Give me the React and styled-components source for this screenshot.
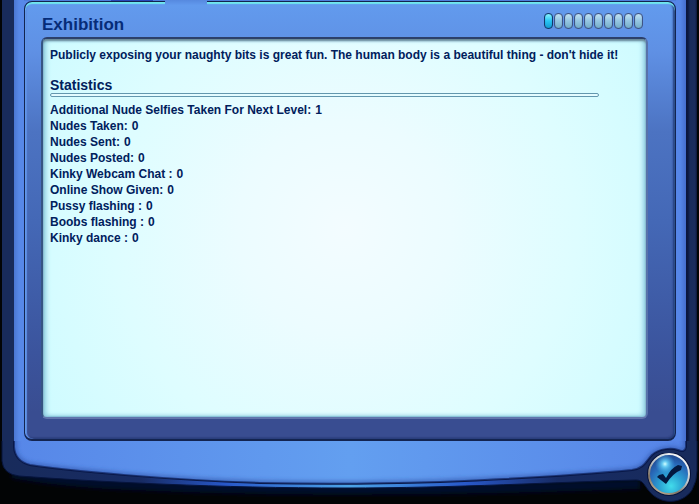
import React from "react";
import styled, { createGlobalStyle } from "styled-components";

const GlobalStyle = createGlobalStyle`
  * { box-sizing: border-box; }
  body {
    margin: 0;
    background: #020405;
    color: #00205c;
    font-family: "Liberation Sans", Arial, Helvetica, sans-serif;
    font-weight: bold;
  }
`;

const Window = styled.main`
  display: flex;
  flex-direction: column;
  min-height: 100vh;
`;

const Casing = styled.div`
  flex: 1;
  display: flex;
  flex-direction: column;
  margin: 0 2px;
  padding: 0 11px 0 12px;
  background: linear-gradient(to right, #182b5b 12px, #0a143c 13px, #0a143c calc(100% - 11px), #0c173f calc(100% - 9px), #182b5b calc(100% - 7px), #1a2c5e calc(100% - 2px), #0b1538 100%);
`;

const Shell = styled.div`
  flex: 1;
  display: flex;
  flex-direction: column;
  padding: 0 10px;
  background: linear-gradient(to right, #4a76d2, #5788e8 5px, #5580e2 50%, #5686e8 calc(100% - 6px), #456dcc);
`;

const TabStrip = styled.div`
  display: flex;
  height: 1px;
  padding-left: 87px;
  gap: 12px;
  background: #4d7edb;
`;

const TabEdge = styled.div`
  position: relative;
  z-index: 1;
  width: 42px;
  height: ${(p) => (p.$open ? "5px" : "1px")};
  background: ${(p) => (p.$open ? "linear-gradient(#5689df, #6199ed)" : "#2848b8")};
`;

const Panel = styled.section`
  flex: 1;
  display: flex;
  flex-direction: column;
  padding: 10px 27px 20px 16px;
  border: solid #132451;
  border-width: 1px 1px 2px;
  border-radius: 8px;
  background: linear-gradient(#629bee, #5f90e4 50px, #4c73c2 130px, #4468b6 220px, #3b549d 350px, #394d91 410px);
  box-shadow: inset 0 2px 1px #6fe6ee, inset 2px 0 1px #608fe7, inset -2px 0 2px #243e7d, inset 0 -1px 2px #202e63;
`;

const PanelHeader = styled.header`
  display: flex;
  align-items: flex-start;
  justify-content: space-between;
  height: 25px;
`;

const Title = styled.h1`
  margin: 3px 0 0 1px;
  font-size: 17px;
  line-height: 20px;
  color: #062c78;
`;

const Level = styled.div`
  display: flex;
  gap: 1px;
  margin-top: 1px;
  margin-right: 5px;
`;

const Pip = styled.span`
  width: 9px;
  height: 16px;
  border: 1px solid;
  border-radius: 4px;
  background: ${(p) => (p.$filled ? "linear-gradient(#8cf5ff, #28c5f4 50%, #159dd2)" : "linear-gradient(#c4e3f3, #98c8e4 45%, #74aec8)")};
  border-color: ${(p) => (p.$filled ? "#123a6c" : "#3f5486")};
  box-shadow: inset 0 0 1px ${(p) => (p.$filled ? "#1b6ea3" : "#4d6c9c")};
`;

const Screen = styled.div`
  flex: 1;
  padding: 8px 8px 8px 7px;
  border: 2px solid #365483;
  border-top-color: #2c406a;
  border-right-color: #5872aa;
  border-bottom-color: #6175ad;
  border-radius: 6px;
  background: radial-gradient(circle at 50% 50%, #f3fcff 0%, #ecfcff 30%, #defdff 65%, #cefbff 100%);
  box-shadow: inset 0 2px 2px #688797, inset 3px 0 5px #8dcbe0, inset -3px 0 5px #8fcbe4, inset 0 -1px 1px #7db2c3;
`;

const Description = styled.p`
  margin: 0;
  font-size: 12px;
  line-height: 16px;
`;

const SectionTitle = styled.h2`
  margin: 14px 0 0;
  font-size: 14px;
  line-height: 16px;
`;

const Divider = styled.div`
  height: 4px;
  margin-right: 39px;
  border: 1px solid #6397ae;
  border-radius: 2px;
  background: #e4fcff;
`;

const Stats = styled.dl`
  margin: 5px 0 0;
  font-size: 12px;
  line-height: 16px;
`;

const Stat = styled.div`
  display: flex;
  gap: 4px;
`;

const StatValue = styled.dd`
  margin: 0;
`;

const Footer = styled.footer`
  display: grid;
  grid-template-columns: minmax(0, 1fr);
  height: 63px;
  > * { grid-area: 1 / 1; }
`;

const FrameEdge = styled.svg`
  display: block;
  width: 100%;
  height: 63px;
`;

const AcceptButton = styled.button`
  justify-self: end;
  width: 44px;
  height: 44px;
  margin: 12px 8px 0 0;
  padding: 0;
  border: 0;
  border-radius: 50%;
  background: none;
  cursor: pointer;
  svg { display: block; width: 100%; height: 100%; }
`;

const stats = [
  ["Additional Nude Selfies Taken For Next Level:", 1],
  ["Nudes Taken:", 0],
  ["Nudes Sent:", 0],
  ["Nudes Posted:", 0],
  ["Kinky Webcam Chat :", 0],
  ["Online Show Given:", 0],
  ["Pussy flashing :", 0],
  ["Boobs flashing :", 0],
  ["Kinky dance :", 0],
];

function CurvedEdge() {
  const inner =
    "M14 -12V6Q15 20 30 24C70 30 170 39 260 42Q345 44 440 41C510 38 580 34 632 29C645 27 646 20 652 14C660 7 672 7 678 9Q685 12 686 6V-12Z";
  return (
    <FrameEdge viewBox="0 0 699 63" preserveAspectRatio="none" aria-hidden="true">
      <defs>
        <linearGradient id="casing">
          <stop offset="0" stopColor="#182b5b" />
          <stop offset=".2" stopColor="#172b63" />
          <stop offset=".32" stopColor="#2857c8" />
          <stop offset=".5" stopColor="#4ca4e8" />
          <stop offset=".67" stopColor="#2857c8" />
          <stop offset=".8" stopColor="#172b63" />
          <stop offset="1" stopColor="#182b5b" />
        </linearGradient>
        <linearGradient id="lip">
          <stop offset="0" stopColor="#5787e8" />
          <stop offset=".5" stopColor="#639ff0" />
          <stop offset="1" stopColor="#5684e7" />
        </linearGradient>
        <clipPath id="lip-area">
          <path d={inner} />
        </clipPath>
        <filter id="glow" x="-5%" y="-40%" width="110%" height="180%">
          <feGaussianBlur stdDeviation="2" />
        </filter>
      </defs>
      <path d="M12 32Q60 41 130 44Q345 54 640 43" fill="none" stroke="#000b2a" strokeWidth="10" filter="url(#glow)" />
      <path
        d="M2 -4V20Q3 33 19 35C100 41 220 47 345 47C455 47 560 41 636 39C643 39 644 44 649 50C660 64 682 64 692 49Q697 40 697 30V-4Z"
        fill="url(#casing)"
        stroke="#06143d"
        strokeWidth="1"
      />
      <path d={inner} fill="url(#lip)" stroke="#091848" strokeWidth="2" />
      <path d={inner} fill="none" stroke="#2f55ab" strokeOpacity=".7" strokeWidth="5" filter="url(#glow)" clipPath="url(#lip-area)" />
    </FrameEdge>
  );
}

function CheckOrb() {
  return (
    <svg viewBox="0 0 44 44" aria-hidden="true">
      <defs>
        <linearGradient id="rim" x1=".8" y1="0" x2=".2" y2="1">
          <stop offset="0" stopColor="#fff" />
          <stop offset=".45" stopColor="#bec4c9" />
          <stop offset=".75" stopColor="#807465" />
          <stop offset="1" stopColor="#c5b69c" />
        </linearGradient>
        <radialGradient id="orb" cx=".55" cy=".8" r=".8">
          <stop offset="0" stopColor="#42dceb" />
          <stop offset=".35" stopColor="#2ba3d3" />
          <stop offset=".7" stopColor="#2868b8" />
          <stop offset="1" stopColor="#1f458c" />
        </radialGradient>
        <radialGradient id="shine">
          <stop offset="0" stopColor="#d4ffff" />
          <stop offset=".3" stopColor="#70dfff" stopOpacity=".8" />
          <stop offset="1" stopColor="#43b4ee" stopOpacity="0" />
        </radialGradient>
      </defs>
      <circle cx="22" cy="21" r="22" fill="#07133a" />
      <circle cx="22" cy="21" r="20" fill="url(#orb)" stroke="url(#rim)" strokeWidth="2" />
      <circle cx="18" cy="11" r="10" fill="url(#shine)" />
      <path d="M10 24L12 22L16 21L19 25Q24 15 31 12L35 13L34 17Q26 20 19 31Z" fill="#03183f" />
    </svg>
  );
}

export default function App() {
  return (
    <Window>
      <GlobalStyle />
      <Casing>
        <Shell>
          <TabStrip>
            <TabEdge />
            <TabEdge $open />
          </TabStrip>
          <Panel aria-labelledby="skill-title">
            <PanelHeader>
              <Title id="skill-title">Exhibition</Title>
              <Level role="meter" aria-label="Level" aria-valuemin={0} aria-valuemax={10} aria-valuenow={1}>
                {Array.from({ length: 10 }, (_, i) => (
                  <Pip key={i} $filled={i < 1} />
                ))}
              </Level>
            </PanelHeader>
            <Screen>
              <Description>
                Publicly exposing your naughty bits is great fun. The human body is a beautiful thing - don't hide it!
              </Description>
              <SectionTitle>Statistics</SectionTitle>
              <Divider />
              <Stats>
                {stats.map(([label, value]) => (
                  <Stat key={label}>
                    <dt>{label}</dt>
                    <StatValue>{value}</StatValue>
                  </Stat>
                ))}
              </Stats>
            </Screen>
          </Panel>
        </Shell>
      </Casing>
      <Footer>
        <CurvedEdge />
        <AcceptButton type="button" aria-label="Accept">
          <CheckOrb />
        </AcceptButton>
      </Footer>
    </Window>
  );
}
